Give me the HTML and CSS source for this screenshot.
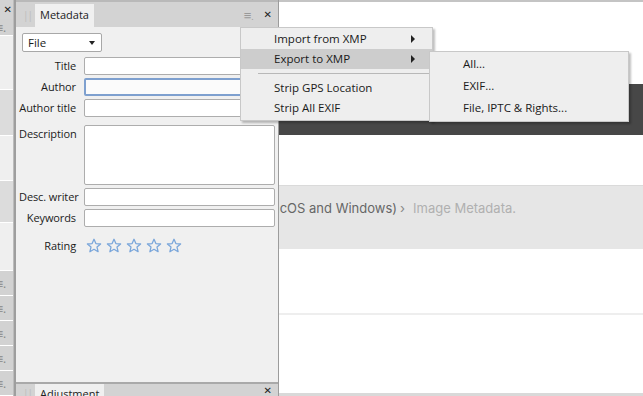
FILE: index.html
```html
<!DOCTYPE html>
<html>
<head>
<meta charset="utf-8">
<link rel="stylesheet" href="styles.css">
</head>
<body>
<div class="app">
  <div class="strip">
    <div class="s-head"><span class="xb">✕</span></div>
    <div class="s-row dark h16"><span class="mi">≡.</span></div>
    <div class="s-row light h54"></div>
    <div class="s-row mid h46"></div>
    <div class="s-row light h45"></div>
    <div class="s-row mid h42"></div>
    <div class="s-row light h48"></div>
    <div class="s-row dark h24"><span class="mi">≡.</span></div>
    <div class="s-row dark h24"><span class="mi">≡.</span></div>
    <div class="s-row dark h24"><span class="mi">≡.</span></div>
    <div class="s-row dark h24"><span class="mi">≡.</span></div>
    <div class="s-row dark h24"><span class="mi">≡.</span></div>
  </div>
  <div class="divider"></div>
  <div class="panel">
    <div class="p-head">
      <span class="grip">||</span>
      <span class="tab">Metadata</span>
      <span class="spacer"></span>
      <span class="menu-ic">≡<small>.</small></span>
      <span class="xb">✕</span>
    </div>
    <div class="p-body">
      <div class="select">File<span class="caret"></span></div>
      <div class="form">
        <label>Title</label><div class="inp"></div>
        <label>Author</label><div class="inp focus"></div>
        <label>Author title</label><div class="inp"></div>
        <label class="top">Description</label><div class="inp area"></div>
        <label>Desc. writer</label><div class="inp"></div>
        <label>Keywords</label><div class="inp"></div>
        <label class="rl">Rating</label>
        <div class="stars">
          <svg viewBox="0 0 16 16"><path d="M8 1.3l1.9 4.3 4.7.4-3.6 3.1 1.1 4.6L8 11.3l-4.1 2.4 1.1-4.6L1.4 6l4.7-.4z"/></svg>
          <svg viewBox="0 0 16 16"><path d="M8 1.3l1.9 4.3 4.7.4-3.6 3.1 1.1 4.6L8 11.3l-4.1 2.4 1.1-4.6L1.4 6l4.7-.4z"/></svg>
          <svg viewBox="0 0 16 16"><path d="M8 1.3l1.9 4.3 4.7.4-3.6 3.1 1.1 4.6L8 11.3l-4.1 2.4 1.1-4.6L1.4 6l4.7-.4z"/></svg>
          <svg viewBox="0 0 16 16"><path d="M8 1.3l1.9 4.3 4.7.4-3.6 3.1 1.1 4.6L8 11.3l-4.1 2.4 1.1-4.6L1.4 6l4.7-.4z"/></svg>
          <svg viewBox="0 0 16 16"><path d="M8 1.3l1.9 4.3 4.7.4-3.6 3.1 1.1 4.6L8 11.3l-4.1 2.4 1.1-4.6L1.4 6l4.7-.4z"/></svg>
        </div>
      </div>
    </div>
    <div class="p-head bottom">
      <span class="grip">||</span>
      <span class="tab">Adjustment</span>
      <span class="spacer"></span>
      <span class="xb">✕</span>
    </div>
  </div>
  <div class="main">
    <div class="topline"></div>
    <div class="gap81"></div>
    <div class="darkband"></div>
    <div class="gap51"></div>
    <div class="crumbs">
      <div class="crumb-clip"><span class="c1">Photo Mechanic (macOS and Windows)</span><span class="sep">›</span><span class="c2">Image Metadata.</span></div>
    </div>
    <div class="gap64"></div>
    <div class="hr"></div>
    <div class="fill"></div>
    <div class="bottombar"></div>
  </div>
</div>

<div class="menu">
  <div class="mi-row">Import from XMP<span class="arr"></span></div>
  <div class="mi-row hl">Export to XMP<span class="arr"></span></div>
  <div class="msep"></div>
  <div class="mi-row">Strip GPS Location</div>
  <div class="mi-row">Strip All EXIF</div>
</div>
<div class="menu sub">
  <div class="mi-row">All...</div>
  <div class="mi-row">EXIF...</div>
  <div class="mi-row">File, IPTC &amp; Rights...</div>
</div>
</body>
</html>
```
FILE: styles.css
```css
* { box-sizing: border-box; }
html, body { margin: 0; padding: 0; }
body {
  width: 643px; height: 396px; overflow: hidden; background: #fff;
  font-family: "Open Sans", "Noto Sans", sans-serif; font-size: 11px; color: #1b1b1b;
  position: relative;
}
.app { display: flex; height: 396px; }
.strip { width: 13px; display: flex; flex-direction: column; overflow: hidden; }
.s-head { height: 27px; background: #d3d3d3; display: flex; align-items: center; justify-content: flex-end; padding-right: 1px; }
.s-row { border-bottom: 1px solid #fff; display: flex; align-items: center; overflow: hidden; flex-shrink: 0; }
.s-row.dark { background: #d2d2d2; }
.s-row.mid { background: #dcdcdc; }
.s-row.light { background: #efefef; }
.h16 { height: 17px; } .h54 { height: 54px; } .h46 { height: 46px; } .h45 { height: 45px; }
.h42 { height: 42px; } .h48 { height: 48px; } .h24 { height: 25px; }
.mi { color: #888; font-size: 12px; margin-left: -4px; }
.xb { font-size: 10px; font-weight: bold; color: #222; font-family: "DejaVu Sans", sans-serif; }
.divider { width: 3px; background: #9e9e9e; border-left: 1px solid #bcbcbc; }
.panel { width: 263px; background: #f0f0f0; border-right: 1px solid #9c9c9c; display: flex; flex-direction: column; position: relative; }
.p-head { height: 27px; background: #d3d3d3; display: flex; align-items: flex-end; padding-left: 7px; padding-right: 6px; border-top: 2px solid #b9b9b9; flex-shrink: 0; }
.p-head.bottom { height: 14px; border-top: 2px solid #a9a9a9; margin-top: auto; align-items: flex-start; }
.grip { color: #bcbcbc; font-size: 10px; letter-spacing: -1px; width: 12px; align-self: center; }
.p-head.bottom .grip { align-self: flex-start; margin-top: 2px; }
.tab { background: #f0f0f0; padding: 3px 5px 4px 5px; height: 23px; font-size: 11px; color: #222; }
.p-head.bottom .tab { height: 14px; padding-top: 2px; margin-top: 0; }
.spacer { flex: 1; }
.menu-ic { color: #999; font-size: 13px; align-self: center; margin-right: 10px; }
.menu-ic small { font-size: 9px; }
.p-head .xb { align-self: center; }
.p-body { padding: 6px 4px 0 3px; }
.select { width: 80px; height: 19px; border: 1px solid #a8a8a8; border-radius: 2px; background: #fff; display: flex; align-items: center; padding-left: 5px; position: relative; font-size: 11.5px; margin-left: 3px; }
.caret { position: absolute; right: 6px; top: 7px; border-left: 3px solid transparent; border-right: 3px solid transparent; border-top: 4px solid #222; }
.form { display: grid; grid-template-columns: 57px 191px; column-gap: 8px; row-gap: 3px; margin-top: 5px; }
.form label { text-align: right; font-size: 11px; line-height: 18px; white-space: nowrap; letter-spacing: -0.1px; }
.inp { height: 18px; background: #fff; border: 1px solid #adadad; border-radius: 2px; }
.inp.focus { border: 2px solid #7ea0cf; background: #fbfbfb; }
.inp.area { height: 60px; margin-top: 5px; }
.form label.top { margin-top: 5px; }
.form label.rl { margin-top: 7px; }
.stars { display: flex; gap: 4px; margin-top: 8px; padding-left: 2px; }
.stars svg { width: 16px; height: 16px; fill: none; stroke: #7aa6da; stroke-width: 1.3; stroke-linejoin: round; }
.main { flex: 1; display: flex; flex-direction: column; }
.topline { height: 3px; border-top: 2px solid #c4c4c4; }
.gap81 { height: 81px; }
.darkband { height: 51px; background: #474747; }
.gap51 { height: 50px; }
.crumbs { height: 64px; background: #e6e6e6; border-top: 1px solid #dadada; display: flex; align-items: flex-start; padding-top: 13px; }
.crumb-clip { width: 237px; display: flex; justify-content: flex-end; overflow: hidden; white-space: nowrap; font-family: Inter, "Noto Sans", sans-serif; font-size: 13px; line-height: 18px; color: #666; flex-shrink: 0; }
.crumb-clip span { flex-shrink: 0; }
.crumbs .sep { color: #888; margin: 0 8px 0 3px; }
.crumbs .c2 { color: #b0b0b0; }
.gap64 { height: 64px; }
.hr { height: 2px; background: #eeeeee; }
.fill { flex: 1; }
.bottombar { height: 3px; background: #d9d9d9; }
.menu { position: absolute; left: 240px; top: 27px; width: 193px; background: #eeeeee; border: 1px solid #c8c8c8; box-shadow: 2px 2px 2px rgba(0,0,0,0.25); padding: 1px 0 2px; font-family: "Open Sans", "Noto Sans", sans-serif; font-size: 11.5px; color: #1a1a1a; }
.mi-row { height: 20px; line-height: 20px; padding-left: 33px; position: relative; }
.mi-row.hl { background: #cdcdcd; }
.arr { position: absolute; right: 17px; top: 6px; border-top: 4px solid transparent; border-bottom: 4px solid transparent; border-left: 4px solid #222; }
.msep { height: 1px; background: #b8b8b8; margin: 4px 0 4px 17px; }
.menu.sub { left: 429px; top: 51px; width: 200px; padding: 1px 0 2px; }
.menu.sub .mi-row { height: 22px; line-height: 22px; }
```
